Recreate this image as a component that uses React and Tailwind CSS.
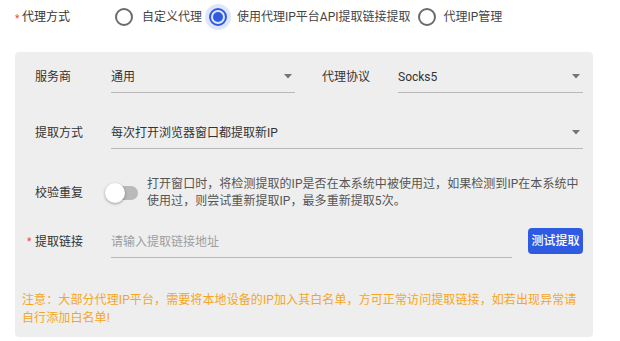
import React from "react";

const font = { fontFamily: 'Roboto, "Noto Sans CJK SC", sans-serif' };

function Arrow() {
  return (
    <svg width="8" height="5" viewBox="0 0 8 5" className="shrink-0">
      <path d="M0 0 L8 0 L4 4.5 Z" fill="#757575" />
    </svg>
  );
}

function Radio({ checked }) {
  return (
    <div className="relative w-[26px] h-[26px] flex items-center justify-center shrink-0">
      {checked && <div className="absolute inset-0 rounded-full bg-[#dfe6fb]" />}
      <div
        className={
          "relative w-[18px] h-[18px] rounded-full border-2 flex items-center justify-center " +
          (checked ? "border-[#2f5be3]" : "border-[#6b6b6b]")
        }
      >
        {checked && <div className="w-[10px] h-[10px] rounded-full bg-[#2f5be3]" />}
      </div>
    </div>
  );
}

function Select({ value, className }) {
  return (
    <div className={"h-[32px] border-b border-[#b8b8b8] flex items-center justify-between pr-[3px] " + className}>
      <span className="text-[12px] text-[#333]">{value}</span>
      <Arrow />
    </div>
  );
}

export default function App() {
  return (
    <div className="w-[620px] h-[341px] bg-white overflow-hidden" style={font}>
      {/* top row */}
      <div className="h-[34px] flex items-center pl-[15px] whitespace-nowrap">
        <span className="text-[#f44336] text-[10px] w-[7px] mt-[2px] shrink-0">*</span>
        <span className="text-[12px] text-[#333] w-[89px] shrink-0">代理方式</span>
        <Radio />
        <span className="text-[12px] text-[#444] ml-[5px] mr-[3px]">自定义代理</span>
        <Radio checked />
        <span className="text-[12px] text-[#444] ml-[6px] mr-[3px]">使用代理IP平台API提取链接提取</span>
        <Radio />
        <span className="text-[12px] text-[#444] ml-[4px]">代理IP管理</span>
      </div>

      {/* panel */}
      <div className="ml-[15px] mt-[18px] w-[578px] h-[285px] bg-[#eeeeee] rounded-[4px] pl-[20px] pr-[10px] pt-[9px] whitespace-nowrap">
        {/* row 1 */}
        <div className="flex items-center">
          <span className="text-[12px] text-[#333] w-[76px] shrink-0">服务商</span>
          <Select value="通用" className="w-[184px] shrink-0" />
          <span className="text-[12px] text-[#333] w-[76px] ml-[27px] shrink-0">代理协议</span>
          <Select value="Socks5" className="w-[185px] shrink-0" />
        </div>
        {/* row 2 */}
        <div className="flex items-center mt-[24px]">
          <span className="text-[12px] text-[#333] w-[76px] shrink-0">提取方式</span>
          <Select value="每次打开浏览器窗口都提取新IP" className="flex-1" />
        </div>
        {/* row 3 */}
        <div className="flex items-center mt-[27px]">
          <span className="text-[12px] text-[#333] w-[70px] shrink-0">校验重复</span>
          <div className="relative w-[33px] h-[20px] shrink-0 flex items-center">
            <div className="absolute left-[3px] right-0 h-[14px] rounded-full bg-[#b9b9b9]" />
            <div className="absolute left-0 w-[20px] h-[20px] rounded-full bg-white shadow-[0_1px_3px_rgba(0,0,0,0.35)]" />
          </div>
          <div className="ml-[9px] text-[12px] tracking-[0.05px] leading-[17px] text-[#555]">
            <div>打开窗口时，将检测提取的IP是否在本系统中被使用过，如果检测到IP在本系统中</div>
            <div>使用过，则尝试重新提取IP，最多重新提取5次。</div>
          </div>
        </div>
        {/* row 4 */}
        <div className="flex items-center mt-[16px]">
          <span className="text-[12px] text-[#333] w-[76px] relative shrink-0">
            <span className="absolute left-[-8px] top-[1px] text-[#f44336] text-[10px]">*</span>
            提取链接
          </span>
          <div className="w-[401px] h-[32px] border-b border-[#b8b8b8] flex items-center shrink-0">
            <span className="text-[12px] text-[#9e9e9e]">请输入提取链接地址</span>
          </div>
          <button className="ml-[16px] w-[55px] h-[26px] rounded-[4px] bg-[#2f5be3] text-white text-[12px] font-medium flex items-center justify-center mb-[2px] shrink-0">
            测试提取
          </button>
        </div>
        {/* notice */}
        <div className="mt-[33px] -ml-[13px] text-[12px] tracking-[0.1px] leading-[18px] text-[#f5a623]">
          <div>注意：大部分代理IP平台，需要将本地设备的IP加入其白名单，方可正常访问提取链接，如若出现异常请</div>
          <div>自行添加白名单!</div>
        </div>
      </div>
    </div>
  );
}
